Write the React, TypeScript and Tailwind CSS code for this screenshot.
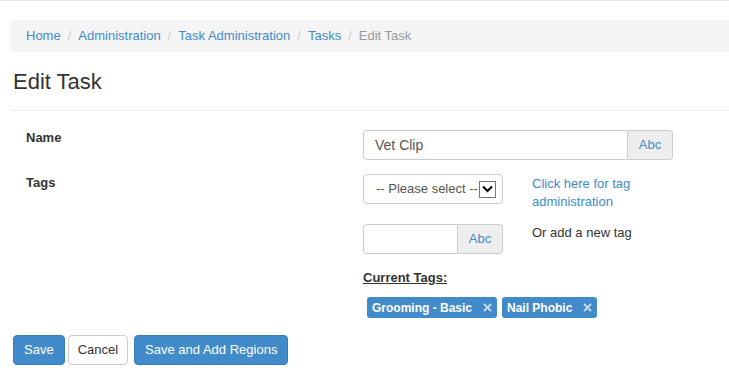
import React from 'react';

const crumbs = ['Home', 'Administration', 'Task Administration', 'Tasks'];
const tags = ['Grooming - Basic', 'Nail Phobic'];

const Addon: React.FC<{ className?: string }> = ({ className }) => (
  <span className={`flex items-center justify-center border border-[#cccccc] bg-[#eeeeee] text-[#428bca] rounded-r ${className ?? ''}`}>
    Abc
  </span>
);

export default function App() {
  return (
    <div className="min-h-[375px] w-[729px] bg-white text-[13px] text-[#333333] font-['Liberation_Sans',Arial,sans-serif] border-t border-[#e5e5e5]">
      <div className="pl-[10px] pt-[19px]">
        <ol className="flex items-center h-[32px] bg-[#f5f5f5] rounded-l px-[16px]">
          {crumbs.map((c) => (
            <li key={c} className="flex items-center">
              <span className="text-[#428bca]">{c}</span>
              <span className="px-[7px] text-[#cccccc]">/</span>
            </li>
          ))}
          <li className="text-[#999999]">Edit Task</li>
        </ol>

        <h1 className="pl-[3px] mt-[15px] text-[22px] leading-[30px] text-[#333333]">Edit Task</h1>
        <div className="mt-[13px] border-t border-[#eeeeee]" />
      </div>

      <div className="flex mt-[19px]">
        <div className="w-[363px] pl-[26px] font-bold">
          <div className="h-[16px] leading-[16px]">Name</div>
          <div className="mt-[29px] leading-[16px]">Tags</div>
        </div>

        <div className="flex flex-col">
          <div className="flex h-[30px] w-[310px]">
            <div className="flex-1 flex items-center border border-[#cccccc] rounded-l px-[11px] text-[14px] text-[#555555]">
              Vet Clip
            </div>
            <Addon className="w-[45px] border-l-0" />
          </div>

          <div className="flex mt-[14px]">
            <div className="w-[140px] h-[30px] border border-[#cccccc] rounded flex items-center pl-[12px] text-[#555555]">
              <span>-- Please select --</span>
              <span className="ml-[1px] w-[17px] h-[17px] border border-[#767676] bg-white flex items-center justify-center">
                <svg width="11" height="8" viewBox="0 0 11 8">
                  <path d="M1 1.5 L5.5 6 L10 1.5" fill="none" stroke="#000" strokeWidth="2" />
                </svg>
              </span>
            </div>
            <a className="ml-[29px] mt-[1px] text-[#428bca] leading-[18px] w-[120px]">Click here for tag administration</a>
          </div>

          <div className="flex mt-[13px]">
            <div className="flex h-[30px] w-[140px]">
              <div className="flex-1 border border-[#cccccc] rounded-l" />
              <Addon className="w-[45px] border-l-0" />
            </div>
            <span className="ml-[29px] mt-[1px] leading-[16px]">Or add a new tag</span>
          </div>

          <div className="mt-[16px] font-bold underline leading-[16px]">Current Tags:</div>

          <div className="flex gap-[5px] mt-[11px] ml-[4px]">
            {tags.map((t) => (
              <span key={t} className="flex items-center h-[21px] rounded-[3px] bg-[#428bca] text-white font-bold text-[12px] pl-[5px] pr-[5px]">
                {t}
                <svg className="ml-[11px]" width="9" height="9" viewBox="0 0 9 9">
                  <path d="M1 1 L8 8 M8 1 L1 8" stroke="#c9dcee" strokeWidth="1.8" />
                </svg>
              </span>
            ))}
          </div>
        </div>
      </div>

      <div className="flex gap-[3px] pl-[13px] mt-[17px]">
        <button className="h-[30px] px-[10px] rounded bg-[#428bca] border border-[#357ebd] text-white">Save</button>
        <button className="h-[30px] px-[9px] rounded bg-white border border-[#cccccc] text-[#333333]">Cancel</button>
        <button className="ml-[3px] h-[30px] px-[10px] rounded bg-[#428bca] border border-[#357ebd] text-white">Save and Add Regions</button>
      </div>
    </div>
  );
}
